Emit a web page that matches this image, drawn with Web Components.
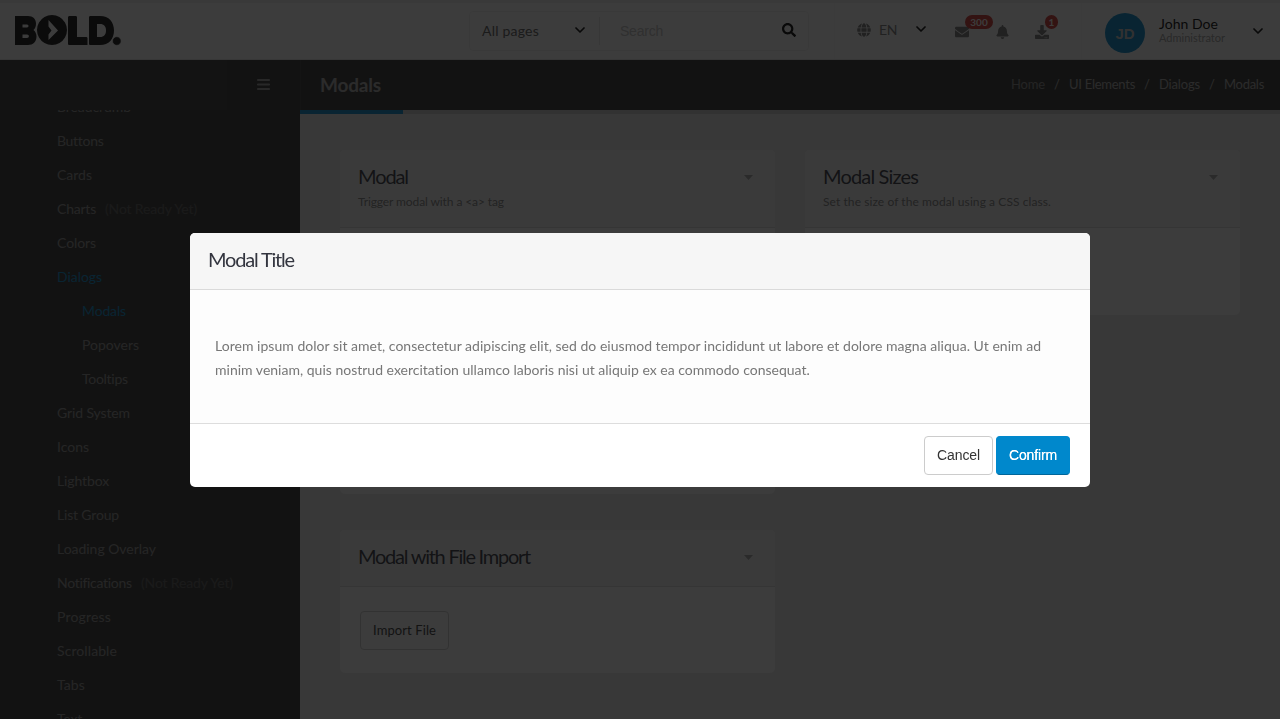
<!DOCTYPE html>
<html lang="en">
<head>
<meta charset="utf-8">
<title>Modals</title>
<style>
html,body{margin:0;height:100%;overflow:hidden}
body{font-family:Lato,"Open Sans","Liberation Sans",sans-serif;font-size:15px;background:#ececec}
</style>
</head>
<body>
<bold-app></bold-app>
<script>
const define=(name,html,after)=>{
  const t=document.createElement('template');
  t.innerHTML=html;
  customElements.define(name,class extends HTMLElement{
    constructor(){super();this.attachShadow({mode:'open'}).append(t.content.cloneNode(true));}
    connectedCallback(){if(after)after.call(this,this.shadowRoot);}
  });
};

/* Text run whose tracking is adjusted so that it spans the width given in "w". */
define('fit-text',`<style>:host{display:inline-block;white-space:nowrap}span{display:inline-block}</style><span><slot></slot></span>`,function(r){
  const s=r.querySelector('span'),w=+this.getAttribute('w');
  if(!w)return;
  const n=this.textContent.length,nat=s.getBoundingClientRect().width;
  this.style.width=w+'px';
  s.style.letterSpacing=((w-nat)/n).toFixed(3)+'px';
});

define('bold-logo',`<style>:host{display:block;width:108px;height:32px}svg{display:block}</style>
<svg width="108" height="32" viewBox="0 0 108 32"><g fill="#0c0c0c">
<path fill-rule="evenodd" d="M0 1h13c5 0 8 3 8 7.500c0 3-.8 5-2.500 6.500c2 1.500 3 4 3 6.500c0 5-3.500 8.500-8.500 8.500H0zM7.500 9.500v3h4.500c2 0 2-3 0-3zM7.500 19.500v3.500h4.500c2.500 0 2.500-3.500 0-3.500z"/>
<path fill-rule="evenodd" d="M37 0a15 15 0 1 1-.01 0zM33.500 5v6.500l3 4l-3 4V25l9.500-9.500z"/>
<path d="M55 1h5.500c1 0 1.500.5 1.500 1.500V22h9c1 0 1.500.5 1.500 1.500v6.500H54.500c-1 0-1.500-.5-1.500-1.500V2.500c0-1 .5-1.500 2-1.500z"/>
<path fill-rule="evenodd" d="M75.500 1H85c9 0 14 6 14 14.500S94 30 85 30H75.500c-1 0-1.500-.5-1.500-1.500v-26c0-1 .5-1.500 1.500-1.500zM82 9v13h3c4 0 6-2.500 6-6.500S89 9 85 9z"/>
<circle cx="101.800" cy="26" r="4.300" stroke="#fff" stroke-width=".6"/></g></svg>`);

const icons={
 chev:'<svg viewBox="0 0 10 7"><path d="M1 1l4 4 4-4" fill="none" stroke="currentColor" stroke-width="1.700" stroke-linecap="round" stroke-linejoin="round"/></svg>',
 search:'<svg viewBox="0 0 512 512"><path fill="currentColor" d="M505 442.700L405.300 343c-4.500-4.500-10.600-7-17-7H372c27.600-35.300 44-79.700 44-128C416 93.100 322.900 0 208 0S0 93.100 0 208s93.100 208 208 208c48.300 0 92.700-16.400 128-44v16.300c0 6.400 2.500 12.500 7 17l99.700 99.700c9.400 9.400 24.600 9.400 33.900 0l28.300-28.300c9.400-9.400 9.400-24.600.1-34zM208 336c-70.700 0-128-57.200-128-128 0-70.700 57.200-128 128-128 70.700 0 128 57.200 128 128 0 70.700-57.200 128-128 128z"/></svg>',
 globe:'<svg viewBox="0 0 496 512"><path fill="currentColor" d="M336.500 160C322 70.700 287.800 8 248 8s-74 62.700-88.500 152h177zM152 256c0 22.200 1.200 43.500 3.300 64h185.300c2.100-20.500 3.300-41.800 3.300-64s-1.200-43.500-3.300-64H155.300c-2.100 20.500-3.300 41.800-3.300 64zm324.700-96c-28.600-67.900-86.500-120.400-158-141.600 24.400 33.800 41.200 84.700 50 141.600h108zM177.200 18.400C105.800 39.600 47.800 92.100 19.300 160h108c8.700-56.900 25.500-107.800 49.900-141.600zM487.400 192H372.700c2.100 21 3.300 42.500 3.300 64s-1.200 43-3.300 64h114.600c5.500-20.500 8.600-41.800 8.600-64s-3.100-43.500-8.500-64zM120 256c0-21.500 1.200-43 3.300-64H8.600C3.200 212.500 0 233.800 0 256s3.200 43.500 8.600 64h114.600c-2-21-3.200-42.500-3.200-64zm39.500 96c14.500 89.300 48.700 152 88.500 152s74-62.700 88.500-152h-177zm159.300 141.600c71.400-21.200 129.400-73.700 158-141.600h-108c-8.800 56.900-25.600 107.800-50 141.600zM19.300 352c28.600 67.900 86.500 120.400 158 141.600-24.400-33.800-41.200-84.700-50-141.600h-108z"/></svg>',
 mail:'<svg viewBox="0 0 512 512"><path fill="currentColor" d="M502.300 190.800c3.900-3.100 9.700-.2 9.700 4.700V400c0 26.500-21.500 48-48 48H48c-26.500 0-48-21.500-48-48V195.600c0-5 5.700-7.800 9.700-4.700 22.400 17.400 52.100 39.500 154.100 113.600 21.100 15.400 56.700 47.800 92.200 47.600 35.700.3 72-32.800 92.300-47.600 102-74.100 131.600-96.300 154-113.700zM256 320c23.200.4 56.600-29.200 73.400-41.400 132.700-96.300 142.800-104.700 173.400-128.700 5.800-4.500 9.200-11.500 9.200-18.900v-19c0-26.500-21.500-48-48-48H48c-26.500 0-48 21.500-48 48v19c0 7.400 3.400 14.300 9.200 18.900 30.600 23.900 40.700 32.400 173.400 128.700 16.800 12.200 50.200 41.800 73.400 41.400z"/></svg>',
 bell:'<svg viewBox="0 0 448 512"><path fill="currentColor" d="M224 512c35.300 0 63.900-28.700 63.900-64H160.100c0 35.300 28.600 64 63.900 64zm215.400-149.700c-19.300-20.800-55.500-52-55.500-154.300 0-77.700-54.500-139.900-127.900-155.200V32c0-17.700-14.300-32-32-32s-32 14.300-32 32v20.800C118.600 68.100 64.100 130.300 64.100 208c0 102.300-36.200 133.500-55.500 154.300-6 6.400-8.700 14.200-8.600 21.700.1 16.400 13 32 32.100 32h383.800c19.100 0 32-15.600 32.100-32 .1-7.500-2.600-15.300-8.600-21.700z"/></svg>',
 down:'<svg viewBox="0 0 512 512"><path fill="currentColor" fill-rule="evenodd" d="M216 0h80c13.300 0 24 10.700 24 24v168h87.700c17.800 0 26.700 21.500 14.100 34.100L269.700 378.300c-7.500 7.500-19.800 7.500-27.300 0L90.100 226.100c-12.600-12.600-3.700-34.100 14.100-34.100H192V24c0-13.300 10.700-24 24-24zm296 376v112c0 13.300-10.700 24-24 24H24c-13.300 0-24-10.700-24-24V376c0-13.300 10.700-24 24-24h146.700l49 49c20.100 20.100 52.500 20.100 72.600 0l49-49H488c13.300 0 24 10.700 24 24zm-124 88c0-11-9-20-20-20s-20 9-20 20 9 20 20 20 20-9 20-20zm64 0c0-11-9-20-20-20s-20 9-20 20 9 20 20 20 20-9 20-20z"/></svg>',
 bars:'<svg viewBox="0 0 13 11"><path d="M.8 1h11.400M.8 5.500h11.400M.8 10h11.400" stroke="currentColor" stroke-width="1.800" stroke-linecap="round"/></svg>',
 caret:'<svg viewBox="0 0 9 5"><path fill="currentColor" d="M0 0h9L4.500 5z"/></svg>'
};
define('ui-icon',`<style>:host{display:block;flex:none}svg{display:block;width:100%;height:100%}</style>`,function(r){
  r.innerHTML+=icons[this.getAttribute('name')];
  this.style.width=this.getAttribute('w')+'px';this.style.height=this.getAttribute('h')+'px';
});

define('count-badge',`<style>:host{position:absolute;display:flex;align-items:center;justify-content:center;height:14px;border-radius:7px;background:#d2322d;color:#fff;font-size:10px;font-weight:700;box-sizing:border-box}</style><slot></slot>`);

define('app-header',`<style>
:host{display:flex;height:60px;box-sizing:border-box;border-top:3px solid #ededed;border-bottom:1px solid #e4e4e4;background:#fff;align-items:center;flex:none}
bold-logo{margin:0 0 0 14.500px}
.search{display:flex;align-items:center;box-sizing:border-box;width:340px;height:40px;border:1px solid #f0f0f0;border-radius:4px;margin:0 0 0 346.500px;color:#666;font-size:14px;padding-bottom:2px}
.search .cat{padding-left:12px;width:93px;color:#5a5a5a}
.search i{width:1px;height:28px;background:#e6e6e6;margin:2px 20px 0 14px}
.search .ph{font-family:"Liberation Sans",sans-serif;color:#c0c0c0;width:162px;padding-top:2px}
.lang{display:flex;align-items:center;height:56px;margin-left:25px;border-left:1px solid #f9f9f9;padding:0 0 3px 22px;color:#777;font-size:14px;gap:8px;box-sizing:border-box;width:121px}
.bells{display:flex;align-items:center;height:56px;color:#777;width:126px;gap:26.500px;position:relative}
.bells ui-icon{margin-top:1px}
.user{display:flex;align-items:center;border-left:1px solid #f8f8f8;height:56px;padding-left:23px;box-sizing:border-box;flex:1;position:relative}
.av{width:40px;height:40px;border-radius:50%;background:#08c;color:#c8c8c8;font:600 15px "Liberation Sans",sans-serif;display:flex;align-items:center;justify-content:center;margin-top:4px;font-weight:700}
.who{margin:-2px 0 0 14px;width:94px;display:flex;flex-direction:column}
.who b{font-weight:400;font-size:14px;line-height:16px;color:#000;height:15px}.who small{font-size:11px;line-height:12px;color:#a0a0a0;padding-top:1px}
.k{color:#000}
</style>
<bold-logo></bold-logo>
<div class="search"><span class="cat"><fit-text w="57">All pages</fit-text></span><ui-icon class="k" name="chev" w="10" h="7"></ui-icon><i></i><span class="ph"><fit-text w="43">Search</fit-text></span><ui-icon class="k" name="search" w="14" h="14"></ui-icon></div>
<div class="lang"><ui-icon name="globe" w="14" h="14"></ui-icon><fit-text w="18">EN</fit-text><ui-icon class="k" style="margin-left:11px" name="chev" w="10" h="7"></ui-icon></div>
<div class="bells"><ui-icon name="mail" w="14" h="14"></ui-icon><ui-icon name="bell" w="13" h="14"></ui-icon><ui-icon name="down" w="14" h="14"></ui-icon>
<count-badge style="left:10px;top:12px;width:28px">300</count-badge><count-badge style="left:90px;top:12px;width:13px">1</count-badge></div>
<div class="user"><div class="av"><fit-text w="19">JD</fit-text></div><div class="who"><b><fit-text w="59">John Doe</fit-text></b><small><fit-text w="66">Administrator</fit-text></small></div><ui-icon class="k" name="chev" w="10" h="7"></ui-icon></div>`);

define('nav-item',`<style>:host{display:flex;align-items:center;height:34px;padding-left:57px;color:#8e8e8e;gap:9px;flex:none}
:host([sub]){padding-left:82px}:host([on]){color:#08c}small{font-size:14px;color:#585858}</style><slot></slot>`,function(r){
  if(this.hasAttribute('note')){const s=document.createElement('small');s.innerHTML='<fit-text w="92">(Not Ready Yet)</fit-text>';r.append(s);}
});

const nav=[['Breadcrumb',74],['Buttons',46],['Cards',35],['Charts',39,'note'],['Colors',39],['Dialogs',45,'on'],['Modals',44,'sub on'],['Popovers',57,'sub'],['Tooltips',46,'sub'],['Grid System',73],['Icons',32],['Lightbox',52],['List Group',62],['Loading Overlay',99],['Notifications',75,'note'],['Progress',54],['Scrollable',60],['Tabs',28],['Text',25]];
define('app-sidebar',`<style>:host{display:flex;flex-direction:column;width:300px;background:#333;flex:none;overflow:hidden}
.top{height:50px;display:flex;align-items:center;justify-content:flex-end;flex:none}
.btn{box-sizing:border-box;width:73px;height:50px;padding-bottom:1px;display:flex;align-items:center;justify-content:center;background:#2f2f2f;color:#999}
nav{flex:1;overflow:hidden;display:flex;flex-direction:column;font-size:14px;background:#313131}
nav nav-item:first-child{margin-top:-21px}</style>
<div class="top"><div class="btn"><ui-icon name="bars" w="13" h="11"></ui-icon></div></div>
<nav>${nav.map(n=>`<nav-item ${n[2]||''}><fit-text w="${n[1]}">${n[0]}</fit-text></nav-item>`).join('')}</nav>`);

define('ui-card',`<style>:host{display:flex;flex-direction:column;border-radius:5px;overflow:hidden;background:#fdfdfd;box-sizing:border-box}
header{box-sizing:border-box;display:flex;justify-content:space-between;padding:14px 22px 0 18px;height:var(--head,77px);background:#f6f6f6;border-bottom:1px solid #dadada;flex:none}
.t{font-size:20px;line-height:24px;height:24px;color:#33353f}.s{font-size:12px;line-height:16px;color:#808080;margin-top:6px}
ui-icon{margin-top:11px;color:#a4a4a4}.b{padding:24px 20px}</style>
<header><div><div class="t"><slot name="title"></slot></div><div class="s"><slot name="sub"></slot></div></div><ui-icon name="caret" w="9" h="5"></ui-icon></header><div class="b"><slot></slot></div>`);

define('ui-button',`<style>:host{display:flex;align-items:center;justify-content:center;box-sizing:border-box;height:39px;border:1px solid #ccc;border-radius:4px;background:#fff;color:#333;font-size:14px;padding-bottom:2px}
:host([primary]){background:#08c;border-color:#08c #08c #006699;color:#fff}</style><slot></slot>`);

define('app-page',`<style>:host{display:flex;flex-direction:column;flex:1;min-width:0;background:#ececec}
.bar{height:50px;background:#313131;display:flex;align-items:center;justify-content:space-between;padding:0 16px 2px 19px;box-sizing:border-box;flex:none;border-left:1px solid #3a3a3a}
h1{margin:0;font-size:19px;font-weight:700;color:#aaa}
ol{margin:0;padding:0;list-style:none;display:flex;font-size:13px;color:#a8a8a8}
.sep{width:24px;text-align:center}
.line{height:4px;background:#ccc;flex:none}.line i{display:block;width:103px;height:4px;background:#08c}
main{display:grid;grid-template-columns:435px 435px;column-gap:30px;padding:36px 40px 0;grid-template-rows:165px 143px 143px;row-gap:36px}
ui-card.e{grid-column:1}
</style>
<div class="bar"><h1><fit-text w="61">Modals</fit-text></h1><ol><li style="color:#888"><fit-text w="34">Home</fit-text></li><li class="sep">/</li><li><fit-text w="66">UI Elements</fit-text></li><li class="sep">/</li><li><fit-text w="41">Dialogs</fit-text></li><li class="sep">/</li><li><fit-text w="40">Modals</fit-text></li></ol></div>
<div class="line"><i></i></div>
<main>
<ui-card style="--head:78px"><fit-text w="50" slot="title">Modal</fit-text><fit-text w="146" slot="sub">Trigger modal with a &lt;a&gt; tag</fit-text></ui-card>
<ui-card style="--head:78px"><fit-text w="95" slot="title">Modal Sizes</fit-text><fit-text w="228" slot="sub">Set the size of the modal using a CSS class.</fit-text></ui-card>
<ui-card class="e" style="--head:57px"></ui-card>
<ui-card class="e" style="--head:57px"><fit-text w="172" slot="title">Modal with File Import</fit-text><ui-button style="width:89px;font-size:13px;background:transparent"><fit-text w="63">Import File</fit-text></ui-button></ui-card>
</main>`);

define('modal-dialog',`<style>:host{position:fixed;inset:0;background:rgba(11,11,11,.8);display:flex;justify-content:center;align-items:center}
section{width:900px;height:254px;margin-top:1px;border-radius:5px;overflow:hidden;background:#fff;display:flex;flex-direction:column}
header{box-sizing:border-box;height:57px;background:#f6f6f6;border-bottom:1px solid #dadada;padding:14px 18px;font-size:20px;line-height:24px;color:#33353f}
.b{flex:1;background:#fdfdfd;padding:44px 25px 0;line-height:24px;font-size:14px;color:#777;box-sizing:border-box;display:flex;flex-direction:column}
footer{box-sizing:border-box;height:64px;border-top:1px solid #ddd;display:flex;justify-content:flex-end;padding:12px 20px 0;gap:3px;font-family:"Liberation Sans",Arial,sans-serif}</style>
<section><header><slot name="title"></slot></header><div class="b"><slot></slot></div><footer><slot name="actions"></slot></footer></section>`);

define('bold-app',`<style>:host{display:flex;flex-direction:column;height:719px;width:1280px;overflow:hidden}.row{display:flex;flex:1;min-height:0}</style>
<app-header></app-header><div class="row"><app-sidebar></app-sidebar><app-page></app-page></div>
<modal-dialog><fit-text w="86" slot="title">Modal Title</fit-text>
<fit-text w="826">Lorem ipsum dolor sit amet, consectetur adipiscing elit, sed do eiusmod tempor incididunt ut labore et dolore magna aliqua. Ut enim ad</fit-text>
<fit-text w="595">minim veniam, quis nostrud exercitation ullamco laboris nisi ut aliquip ex ea commodo consequat.</fit-text>
<ui-button slot="actions" style="width:69px;font-family:'Liberation Sans',sans-serif"><fit-text w="43">Cancel</fit-text></ui-button><ui-button slot="actions" primary style="width:74px;font-family:'Liberation Sans',sans-serif;text-shadow:0 0 .6px #fff"><fit-text w="48">Confirm</fit-text></ui-button></modal-dialog>`);
</script>
</body>
</html>
